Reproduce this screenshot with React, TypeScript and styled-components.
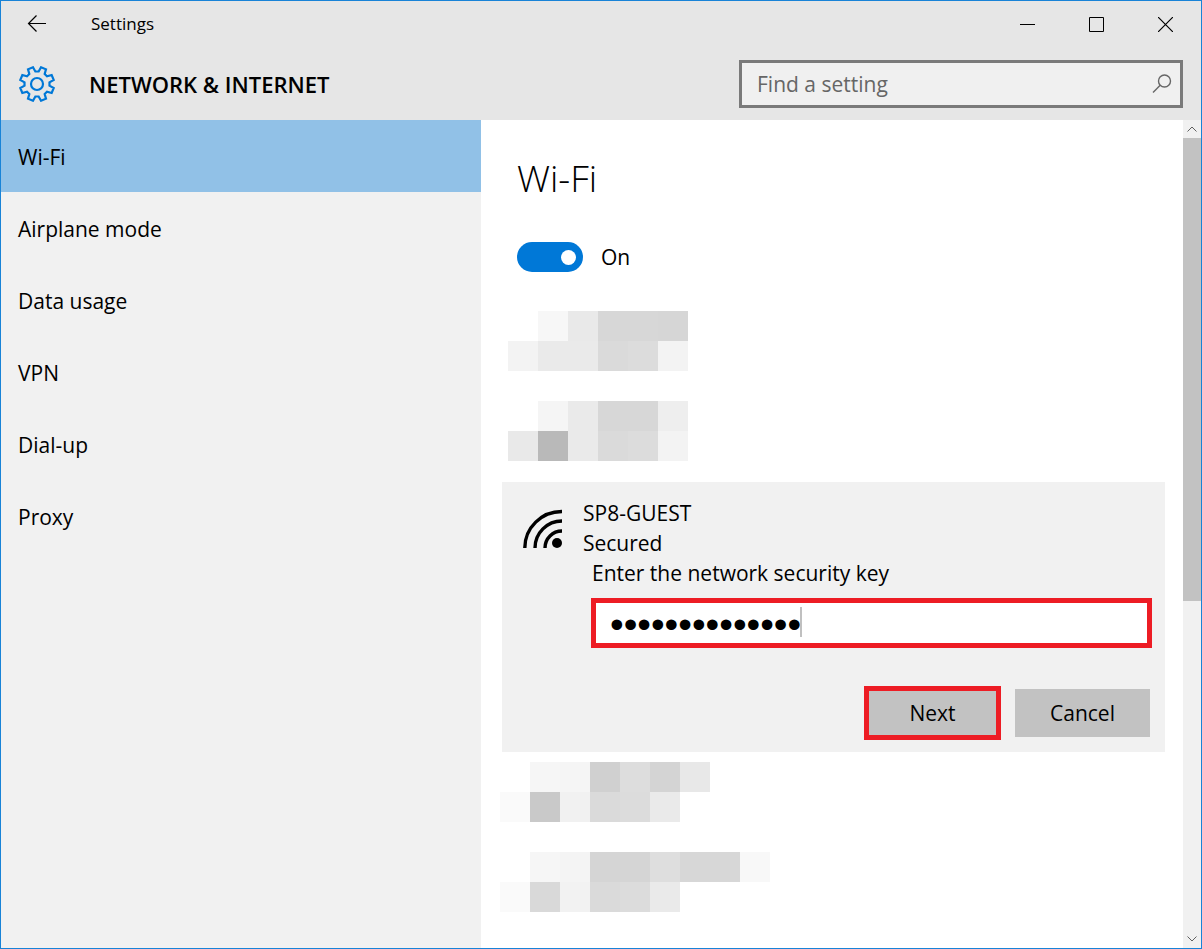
import React, { useState } from "react";
import styled, { createGlobalStyle } from "styled-components";

const GlobalStyle = createGlobalStyle`
  *, *::before, *::after { box-sizing: border-box; }
  body {
    margin: 0;
    background: #fff;
    color: #000;
    font-family: "Open Sans", "Noto Sans", sans-serif;
    font-size: 21px;
    line-height: 30px;
  }
  button, input { font: inherit; color: inherit; }
`;

const Window = styled.div`
  display: flex;
  flex-direction: column;
  min-height: 100vh;
  border: 1px solid #1883d7;
`;

const TitleBar = styled.header`
  display: flex;
  align-items: center;
  height: 46px;
  padding-right: 1px;
  background: #e6e6e6;
`;

const TitleButton = styled.button<{ $width: number }>`
  display: flex;
  align-items: center;
  justify-content: center;
  width: ${(p) => p.$width}px;
  height: 100%;
  padding: 0;
  border: 0;
  background: none;
`;

const WindowTitle = styled.span`
  flex: 1;
  padding-left: 18px;
  font-size: 17px;
`;

const PageHeader = styled.div`
  display: flex;
  align-items: center;
  height: 73px;
  padding: 0 18px;
  background: #e6e6e6;
`;

const PageTitle = styled.h1`
  flex: 1;
  margin: 0 0 0 34px;
  font-size: 22px;
  font-weight: 600;
`;

const SearchBox = styled.label`
  display: flex;
  align-items: center;
  width: 444px;
  height: 48px;
  padding: 0 8px 0 15px;
  border: 3px solid #7a7a7a;
  background: #f0f0f0;
`;

const SearchInput = styled.input`
  flex: 1;
  min-width: 0;
  padding: 0;
  border: 0;
  outline: 0;
  background: none;
  &::placeholder { color: #666; opacity: 1; }
`;

const Body = styled.div`
  flex: 1;
  display: grid;
  grid-template-columns: 40% 1fr 18px;
`;

const Sidebar = styled.nav`
  background: #f1f1f1;
`;

const NavLink = styled.a<{ $active: boolean }>`
  display: flex;
  align-items: center;
  height: 72px;
  padding: 2px 17px 0;
  color: inherit;
  text-decoration: none;
  background: ${(p) => (p.$active ? "#91c1e7" : "transparent")};
`;

const Main = styled.main`
  padding: 36px 18px 0 19px;
`;

const Section = styled.section`
  padding: 0 17px;
`;

const SectionTitle = styled.h2`
  margin: 0;
  font-size: 37px;
  font-weight: 300;
  line-height: 44px;
`;

const ToggleLabel = styled.label`
  display: flex;
  align-items: center;
  gap: 18px;
  margin: 42px 0 39px;
`;

const Toggle = styled.input`
  appearance: none;
  display: flex;
  align-items: center;
  justify-content: flex-end;
  width: 66px;
  height: 30px;
  margin: 0;
  padding: 0 7px;
  border-radius: 15px;
  background: #0078d7;
  &::before {
    content: "";
    width: 15px;
    height: 15px;
    border-radius: 50%;
    background: #fff;
  }
  &:not(:checked) { justify-content: flex-start; background: #999; }
`;

const Mosaic = styled.div<{ $indent: number }>`
  margin: 0 0 30px ${(p) => p.$indent}px;
`;

const MosaicRow = styled.div`
  display: flex;
`;

const Tile = styled.span<{ $shade: string }>`
  width: 30px;
  height: 30px;
  background: ${(p) => p.$shade};
`;

const NetworkCard = styled.form`
  display: flex;
  gap: 21px;
  margin: -9px 0 10px 2px;
  padding: 16px 15px 12px 20px;
  background: #f1f1f1;
`;

const SignalIcon = styled.svg`
  flex: none;
  margin-top: 10px;
`;

const NetworkDetails = styled.div`
  flex: 1;
  min-width: 0;
`;

const KeyArea = styled.div`
  margin-right: -2px;
  padding-left: 8px;
`;

const KeyLabel = styled.label`
  display: block;
  padding-left: 1px;
`;

const KeyField = styled.div`
  position: relative;
  margin-top: 10px;
`;

const KeyInput = styled.input`
  display: block;
  width: 100%;
  height: 50px;
  padding: 4px 14px 0;
  border: 5px solid #ed1c24;
  outline: 0;
  background: #fff;
  font-family: "Liberation Sans", sans-serif;
  font-size: 39px;
  line-height: 36px;
`;

const Caret = styled.span`
  position: absolute;
  top: 9px;
  left: 209px;
  width: 2px;
  height: 30px;
  background: #c0c0c0;
`;

const Actions = styled.div`
  display: flex;
  align-items: center;
  justify-content: flex-end;
  gap: 14px;
  margin-top: 38px;
`;

const ActionButton = styled.button<{ $marked?: boolean }>`
  width: ${(p) => (p.$marked ? 137 : 135)}px;
  height: ${(p) => (p.$marked ? 54 : 48)}px;
  padding: 0;
  border: ${(p) => (p.$marked ? "5px solid #ed1c24" : "0")};
  background: #c2c2c2;
`;

const ScrollBar = styled.div`
  display: flex;
  flex-direction: column;
  background: #f1f1f1;
`;

const ScrollButton = styled.button`
  display: flex;
  align-items: center;
  justify-content: center;
  height: 18px;
  padding: 0;
  border: 0;
  background: none;
`;

const ScrollTrack = styled.div`
  flex: 1;
`;

const ScrollThumb = styled.div`
  height: 58.5%;
  background: #c2c2c2;
`;

const navItems = ["Wi-Fi", "Airplane mode", "Data usage", "VPN", "Dial-up", "Proxy"];

const networksAbove = [
  [
    ["#fff", "#f7f7f7", "#e9e9e9", "#d7d7d7", "#d7d7d7", "#d6d6d6"],
    ["#f3f3f3", "#eaeaea", "#eaeaea", "#dadada", "#dcdcdc", "#f3f3f3"],
  ],
  [
    ["#fff", "#f5f5f5", "#eaeaea", "#d7d7d7", "#d7d7d7", "#eeeeee"],
    ["#e9e9e9", "#b9b9b9", "#eaeaea", "#dadada", "#dcdcdc", "#f3f3f3"],
  ],
];

const networksBelow = [
  [
    ["#fff", "#f6f6f6", "#f5f5f5", "#d0d0d0", "#dddddd", "#d4d4d4", "#e8e8e8"],
    ["#fafafa", "#c9c9c9", "#f1f1f1", "#dadada", "#dcdcdc", "#eaeaea"],
  ],
  [
    ["#fff", "#f6f6f6", "#f4f4f4", "#d5d5d5", "#d5d5d5", "#dedede", "#d7d7d7", "#d7d7d7", "#f8f8f8"],
    ["#fafafa", "#d9d9d9", "#f2f2f2", "#dadada", "#dcdcdc", "#eaeaea"],
  ],
];

function HiddenNetwork({ rows, indent }: { rows: string[][]; indent: number }) {
  return (
    <Mosaic $indent={indent}>
      {rows.map((row, y) => (
        <MosaicRow key={y}>
          {row.map((shade, x) => (
            <Tile key={x} $shade={shade} />
          ))}
        </MosaicRow>
      ))}
    </Mosaic>
  );
}

// Outline of an eight-toothed cog centred on the origin.
function cogPath(teeth: number, outer: number, inner: number) {
  const points: string[] = [];
  const at = (radius: number, degrees: number) => {
    const a = (degrees * Math.PI) / 180;
    points.push(`${(radius * Math.sin(a)).toFixed(2)} ${(-radius * Math.cos(a)).toFixed(2)}`);
  };
  for (let i = 0; i < teeth; i++) {
    const mid = (360 / teeth) * (i + 0.5);
    at(inner, mid - 15);
    at(outer, mid - 9);
    at(outer, mid + 9);
    at(inner, mid + 15);
  }
  return `M${points.join("L")}Z`;
}

export default function App() {
  const [wifiOn, setWifiOn] = useState(true);
  const [key, setKey] = useState("guestnetwork14");

  return (
    <>
      <GlobalStyle />
      <Window>
        <TitleBar>
          <TitleButton $width={72} aria-label="Back">
            <svg width="20" height="18" viewBox="0 0 20 18" fill="none" stroke="#000" strokeWidth="1.2">
              <path d="M19 8.500H1.500M9.500 .5L1.500 8.500l8 8" />
            </svg>
          </TitleButton>
          <WindowTitle>Settings</WindowTitle>
          <TitleButton $width={69} aria-label="Minimize">
            <svg width="15" height="15" stroke="#000"><path d="M0 7.5H15" /></svg>
          </TitleButton>
          <TitleButton $width={69} aria-label="Maximize">
            <svg width="15" height="15" fill="none" stroke="#000"><path d="M.5 .5h14v14H.5z" /></svg>
          </TitleButton>
          <TitleButton $width={69} aria-label="Close">
            <svg width="15" height="15" stroke="#000" strokeWidth="1.2"><path d="M0 0L15 15M15 0L0 15" /></svg>
          </TitleButton>
        </TitleBar>
        <PageHeader>
          <svg width="36" height="36" viewBox="-18 -18 36 36" fill="none" stroke="#0078d7" strokeWidth="2.2">
            <path d={cogPath(8, 17.2, 12.6)} />
            <circle r="6" />
          </svg>
          <PageTitle>NETWORK &amp; INTERNET</PageTitle>
          <SearchBox>
            <SearchInput type="text" placeholder="Find a setting" aria-label="Find a setting" />
            <svg width="20" height="20" viewBox="0 0 20 20" fill="none" stroke="#666" strokeWidth="1.4">
              <circle cx="12.5" cy="7" r="6" />
              <path d="M8.2 11.3L1 18.5" />
            </svg>
          </SearchBox>
        </PageHeader>
        <Body>
          <Sidebar>
            {navItems.map((item, i) => (
              <NavLink key={item} href="#" $active={i === 0}>{item}</NavLink>
            ))}
          </Sidebar>
          <Main>
            <Section>
              <SectionTitle>Wi-Fi</SectionTitle>
              <ToggleLabel>
                <Toggle type="checkbox" role="switch" checked={wifiOn} onChange={(e) => setWifiOn(e.target.checked)} />
                {wifiOn ? "On" : "Off"}
              </ToggleLabel>
            </Section>
            {networksAbove.map((rows, i) => <HiddenNetwork key={i} rows={rows} indent={8} />)}
            <NetworkCard onSubmit={(e) => e.preventDefault()}>
              <SignalIcon width="40" height="40" viewBox="0 0 40 40" fill="none" stroke="#000" strokeWidth="3.4">
                <path d="M2.800 40A37 36.500 0 0 1 40 3.500M13 40A27 27 0 0 1 40 13M23 40A17 17 0 0 1 40 23" />
                <circle cx="35" cy="35" r="5" fill="#000" stroke="none" />
              </SignalIcon>
              <NetworkDetails>
                <div>SP8-GUEST</div>
                <div>Secured</div>
                <KeyArea>
                  <KeyLabel htmlFor="security-key">Enter the network security key</KeyLabel>
                  <KeyField>
                    <KeyInput id="security-key" type="password" value={key} onChange={(e) => setKey(e.target.value)} />
                    <Caret />
                  </KeyField>
                </KeyArea>
                <Actions>
                  <ActionButton type="submit" $marked>Next</ActionButton>
                  <ActionButton type="button">Cancel</ActionButton>
                </Actions>
              </NetworkDetails>
            </NetworkCard>
            {networksBelow.map((rows, i) => <HiddenNetwork key={i} rows={rows} indent={0} />)}
          </Main>
          <ScrollBar>
            <ScrollButton aria-label="Scroll up">
              <svg width="10" height="6" fill="none" stroke="#606060"><path d="M.5 5.5L5 1l4.500 4.500" /></svg>
            </ScrollButton>
            <ScrollTrack><ScrollThumb /></ScrollTrack>
            <ScrollButton aria-label="Scroll down">
              <svg width="10" height="6" fill="none" stroke="#606060"><path d="M.5 .5L5 5l4.500-4.500" /></svg>
            </ScrollButton>
          </ScrollBar>
        </Body>
      </Window>
    </>
  );
}
